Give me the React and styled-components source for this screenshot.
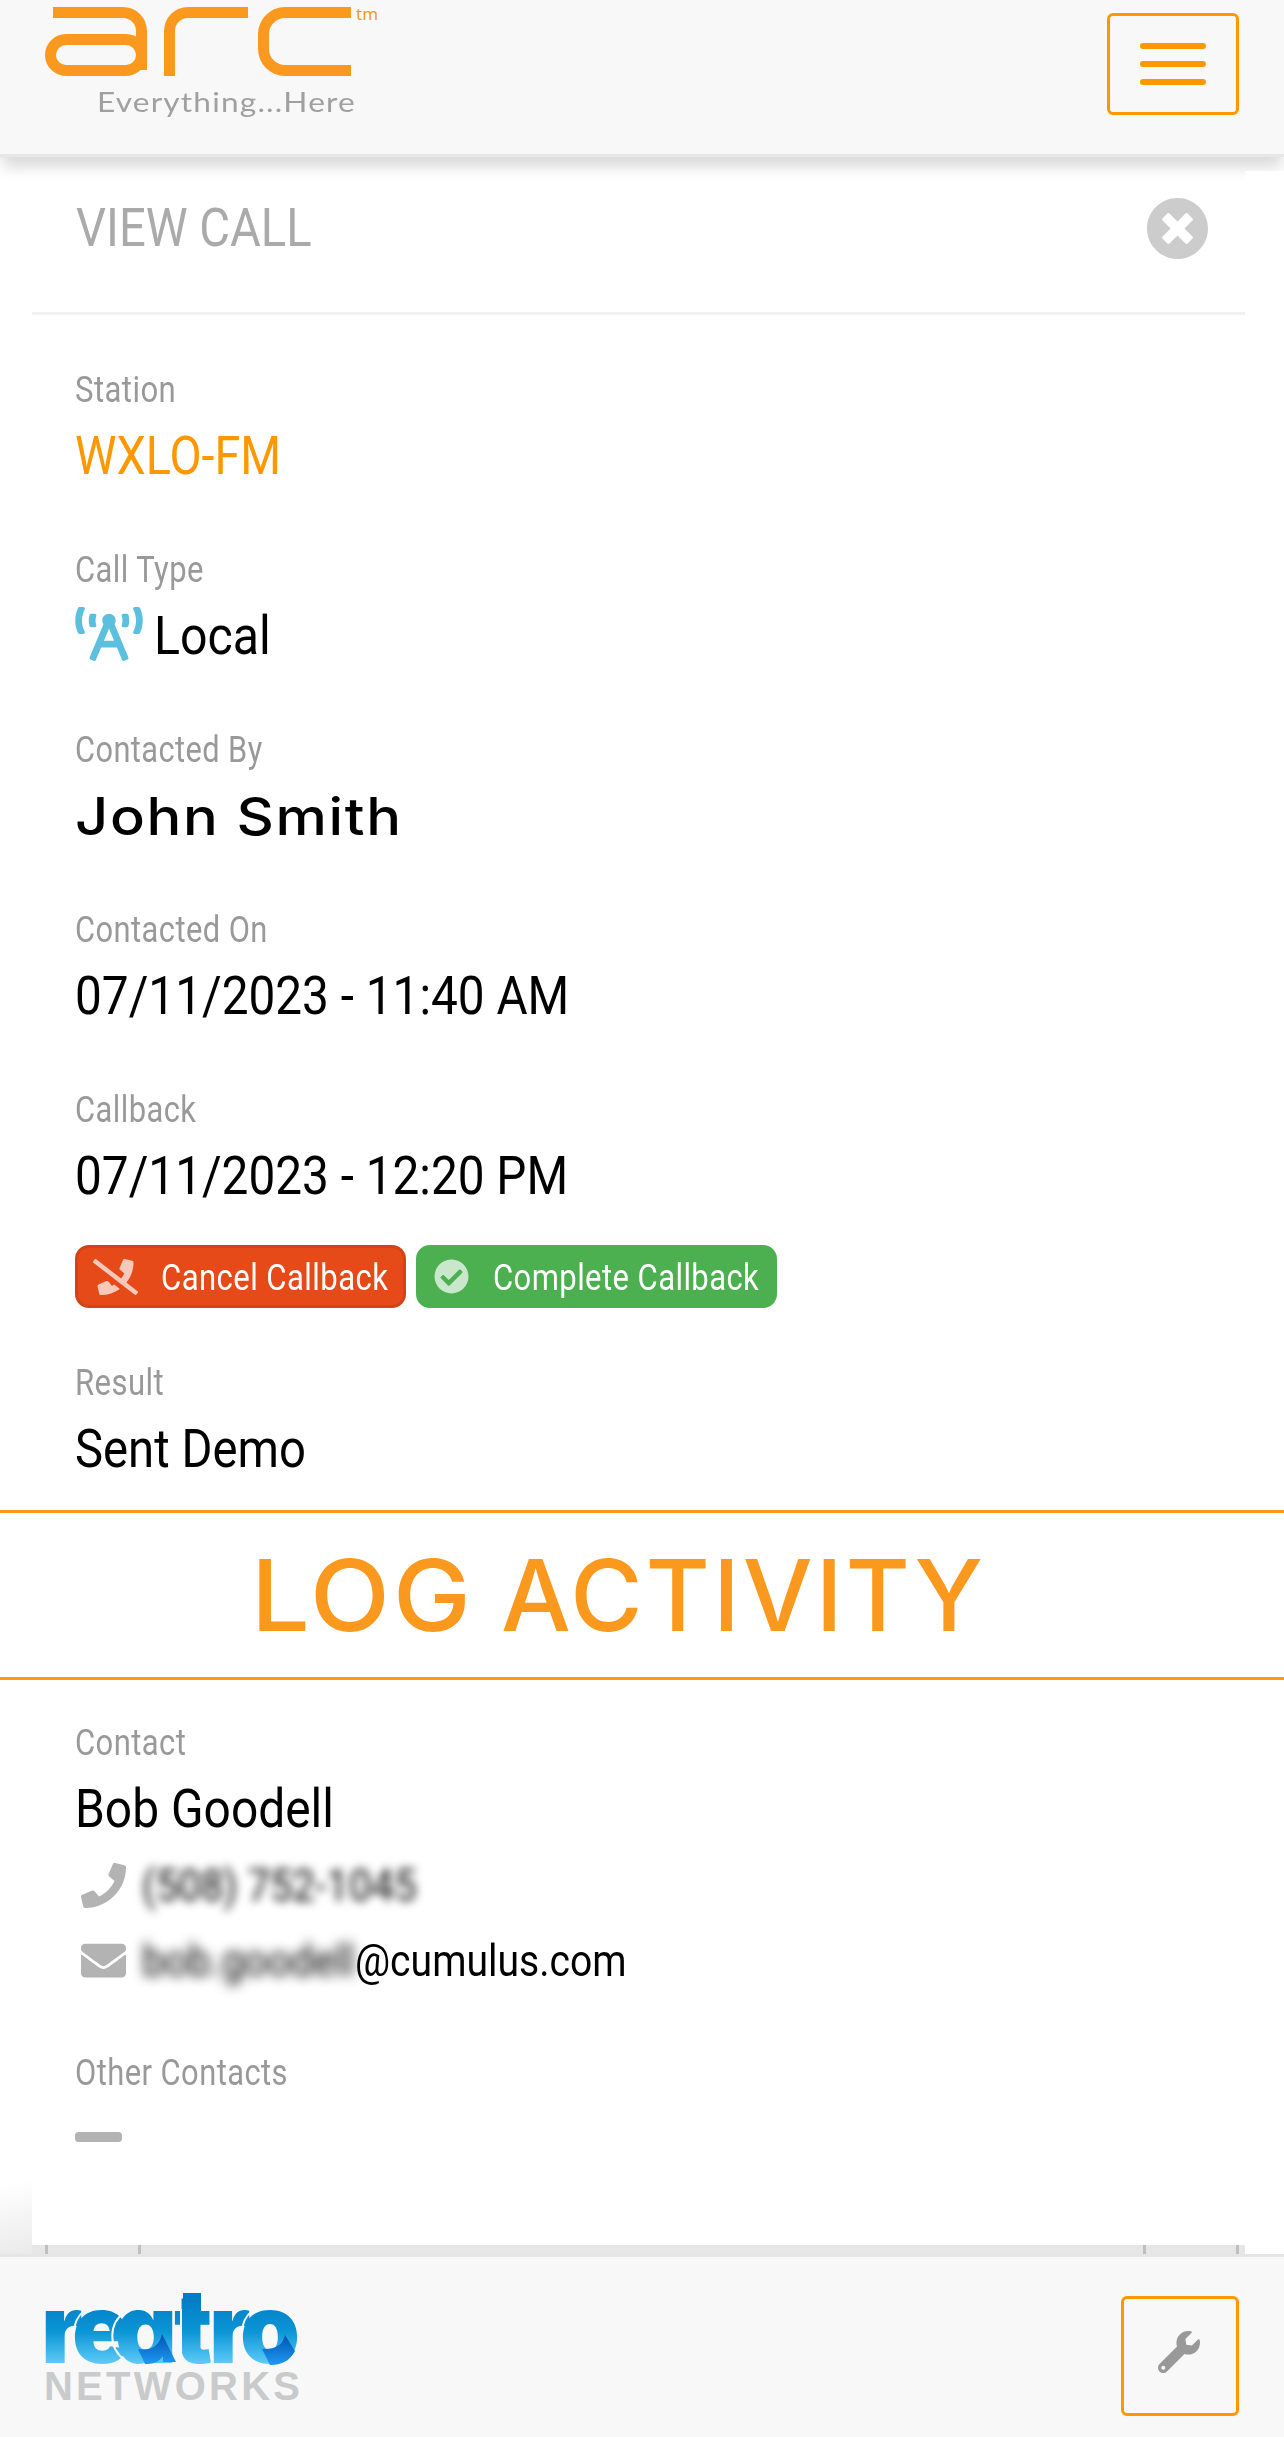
import React from 'react';
import styled, { createGlobalStyle } from 'styled-components';
import {
  FaBroadcastTower,
  FaCheckCircle,
  FaEnvelope,
  FaMinus,
  FaPhone,
  FaPhoneSlash,
  FaTimesCircle,
  FaWrench
} from 'react-icons/fa';

const GlobalStyle = createGlobalStyle`
  * { box-sizing: border-box; }

  body {
    margin: 0;
    background: #fff;
    font-family: Roboto, "Liberation Sans", sans-serif;
    color: #000;
  }

  svg { display: block; flex: none; }
`;

const Page = styled.div`
  width: 1284px;
  height: 2437px;
  display: flex;
  flex-direction: column;
  overflow: hidden;
`;

const TopBar = styled.header`
  position: relative;
  z-index: 1;
  flex: none;
  height: 157px;
  padding: 7px 45px 0;
  display: flex;
  justify-content: space-between;
  background: #f8f8f8;
  border-bottom: 3px solid #e7e7e7;
  box-shadow: 0 12px 14px -2px rgba(0, 0, 0, 0.15);
`;

const ArcMark = styled.div`
  display: flex;
  height: 69px;
`;

const LetterA = styled.div`
  width: 102px;
  height: 69px;
  display: grid;
  margin-right: 17px;

  &::before, &::after {
    content: "";
    grid-area: 1 / 1;
    border: 11px solid #fb991e;
  }

  &::before {
    margin-left: 8px;
    height: 52px;
    border-left: 0;
    border-bottom: 0;
    border-top-right-radius: 24px;
  }

  &::after {
    margin-top: 27px;
    border-radius: 22px;
  }
`;

const LetterR = styled.div`
  width: 84px;
  margin-right: 10px;
  border: 11px solid #fb991e;
  border-right: 0;
  border-bottom: 0;
  border-top-left-radius: 24px;
`;

const LetterC = styled.div`
  width: 93px;
  border: 11px solid #fb991e;
  border-right: 0;
  border-radius: 27px 0 0 27px;
`;

const Trademark = styled.span`
  margin: -3px 0 0 5px;
  font: 17px/20px "Noto Sans", sans-serif;
  color: #fb991e;
`;

const Tagline = styled.div`
  margin: 9px 0 0 52px;
  font: 27px/34px Lato, sans-serif;
  letter-spacing: 1px;
  color: #a0a0a0;
`;

const Toggle = styled.button`
  width: 132px;
  height: 102px;
  margin-top: 6px;
  padding: 0;
  display: flex;
  flex-direction: column;
  align-items: center;
  justify-content: center;
  gap: 12px;
  background: none;
  border: 3px solid #ff9800;
  border-radius: 6px;
`;

const ToggleBar = styled.span`
  width: 66px;
  height: 6px;
  border-radius: 3px;
  background: #ff9800;
`;

const PanelHead = styled.div`
  position: relative;
  z-index: 2;
  flex: none;
  height: 158px;
  margin: 0 39px 0 32px;
  padding: 38px 36px 0 44px;
  display: flex;
  justify-content: space-between;
  border-bottom: 3px solid #f1f1f1;
  font-size: 54px;
  line-height: 66px;
  color: #aaa;

  svg {
    margin-top: 2px;
    color: #ccc;
  }

  /* gutter beside the panel, over the header shadow */
  &::after {
    content: "";
    position: absolute;
    top: 14px;
    left: 100%;
    width: 39px;
    height: 144px;
    background: #fff;
  }
`;

const Section = styled.section`
  height: ${props => props.$height}px;
  flex: none;
  padding: ${props => props.$top}px 75px 0;
`;

const Field = styled.div`
  margin-bottom: ${props => props.$tight ? '6px' : '57px'};
`;

const Label = styled.div`
  font-size: 36px;
  line-height: 48px;
  letter-spacing: 0.5px;
  color: #999;
`;

const Value = styled.div`
  margin-top: 9px;
  display: flex;
  height: 66px;
  font-size: 54px;
  line-height: 66px;
  color: ${props => props.$accent ? '#ff9800' : '#000'};

  svg {
    width: 68px;
    margin: 4px 11px 0 0;
    color: #5bc0de;
  }
`;

const PersonValue = styled(Value)`
  font: 500 52px/68px Inter, sans-serif;
  letter-spacing: 1.5px;
`;

const Buttons = styled.div`
  display: flex;
  gap: 10px;
  margin: -21px 0 51px;
`;

const Button = styled.button`
  width: ${props => props.$danger ? 331 : 361}px;
  height: 63px;
  padding: 0 15px;
  display: flex;
  align-items: center;
  justify-content: space-between;
  font: 36px/54px Roboto, sans-serif;
  letter-spacing: 0.5px;
  text-align: left;
  color: #fff;
  background: ${props => props.$danger ? '#e64a19' : '#4caf50'};
  border: 3px solid ${props => props.$danger ? '#d24317' : '#4caf50'};
  border-radius: 14px;

  svg {
    width: ${props => props.$danger ? 45 : 35}px;
    opacity: 0.7;
  }

  > span { padding-top: 2px; }
`;

const LogStrip = styled.div`
  flex: none;
  height: 170px;
  padding-left: 251px;
  display: flex;
  gap: 27px;
  border: solid #fb991e;
  border-width: 3.5px 0;
  font: 500 99px/165px Inter, sans-serif;
  letter-spacing: 3px;
  color: #fb991e;
`;

const ContactRow = styled.div`
  display: flex;
  align-items: center;
  height: 75px;
  padding-left: 6px;
  font-size: 45px;
  line-height: 60px;

  svg {
    margin-right: 16px;
    color: #b3b3b3;
  }

  & + & { margin-bottom: 51px; }
`;

const Obscured = styled.span`
  display: flex;
  filter: blur(${props => props.$strong ? '6px' : '5px'});
  color: #000;
`;

const Empty = styled.div`
  margin-top: 13px;
  color: #b3b3b3;

  svg { width: 47px; }
`;

const Shade = styled.div`
  flex: none;
  width: 32px;
  height: 73px;
  margin: -64px 0 -9px;
  background: linear-gradient(170deg, #fff 5%, #eaeaea);
`;

const TableEdge = styled.div`
  flex: none;
  height: 9px;
  margin: 0 39px 0 32px;
  padding: 0 6px 0 13px;
  display: flex;
  justify-content: space-between;
  background: #e6e6e6;
`;

const Cell = styled.div`
  width: 96px;
  border: solid #bfbfbf;
  border-width: 0 3px;
`;

const BottomBar = styled.footer`
  flex: none;
  height: 183px;
  padding: 0 45px 0 36px;
  display: flex;
  justify-content: space-between;
  background: #f8f8f8;
  border-top: 3px solid #e5e5e5;
`;

const ToolButton = styled.button`
  width: 118px;
  height: 120px;
  margin-top: 39px;
  padding: 0 2px 8px 0;
  display: flex;
  align-items: center;
  justify-content: center;
  background: none;
  border: 3px solid #ff9800;
  border-radius: 6px;
  color: #999;
`;

const FitBox = styled.span`
  display: block;
  flex: none;
  width: ${props => props.$width}px;
  white-space: nowrap;
`;

const FitText = styled.span`
  display: inline-block;
  transform-origin: 0 50%;
`;

// Condenses a line of text to the given width
const Fit = ({ width, children }) => {
  const ref = React.useRef(null);
  const [scale, setScale] = React.useState(1);

  React.useLayoutEffect(() => {
    setScale(width / ref.current.offsetWidth);
  }, [width, children]);

  return (
    <FitBox $width={width}>
      <FitText ref={ref} style={{ transform: `scaleX(${scale})` }}>{children}</FitText>
    </FitBox>
  );
};

const Wordmark = styled.text`
  font: 900 96px Inter, sans-serif;
  font-feature-settings: "cv11";
`;

const ReatroLogo = () => (
  <svg width="270" height="156" viewBox="-8 0 270 156">
    <defs>
      <linearGradient id="blue" gradientUnits="userSpaceOnUse" x1="0" y1="43" x2="0" y2="107">
        <stop offset="0" stopColor="#007dc5" />
        <stop offset="0.5" stopColor="#0c96d6" />
        <stop offset="1" stopColor="#5fcbf8" />
      </linearGradient>
      <linearGradient id="fold" x1="0" y1="0" x2="0" y2="1">
        <stop offset="0" stopColor="#0052b4" />
        <stop offset="1" stopColor="#1e9af0" />
      </linearGradient>
    </defs>
    <rect x="139" y="36" width="18" height="24" fill="url(#blue)" />
    <Wordmark x="-3 28 71 130 165 196" y="106" fill="url(#blue)">reatro</Wordmark>
    <g fill="none" stroke="#f8f8f8" strokeWidth="2">
      <path d="M41 53a29 29 0 0 0 -11 24" />
      <path d="M81 55a29 29 0 0 0 0 48" />
      <path d="M137 52v56" />
      <path d="M209 53a29 29 0 0 0 -11 24" />
    </g>
    <path d="M94 92q20 3 24 -15l14 28h-13v-6q-6 9 -18 8z" fill="url(#fold)" />
    <path d="M218 92q20 1 23 -14l10 16q-7 14 -25 14z" fill="url(#fold)" />
    <text
      x="0"
      y="143"
      textLength="256"
      fontFamily="Liberation Sans, sans-serif"
      fontSize="40"
      fontWeight="700"
      fill="#c9cacc"
    >NETWORKS</text>
  </svg>
);

class App extends React.Component {

  render() {
    return (
      <Page>
        <GlobalStyle />

        <TopBar>
          <div>
            <ArcMark aria-label="arc">
              <LetterA />
              <LetterR />
              <LetterC />
              <Trademark>tm</Trademark>
            </ArcMark>
            <Tagline><Fit width={259}>Everything...Here</Fit></Tagline>
          </div>
          <Toggle aria-label="Menu">
            <ToggleBar />
            <ToggleBar />
            <ToggleBar />
          </Toggle>
        </TopBar>

        <PanelHead>
          <Fit width={236}>VIEW CALL</Fit>
          <FaTimesCircle size={63} />
        </PanelHead>

        <Section $top={51} $height={1195}>
          <Field>
            <Label><Fit width={101}>Station</Fit></Label>
            <Value $accent><Fit width={206}>WXLO-FM</Fit></Value>
          </Field>
          <Field>
            <Label><Fit width={129}>Call Type</Fit></Label>
            <Value>
              <FaBroadcastTower size={54} />
              <Fit width={117}>Local</Fit>
            </Value>
          </Field>
          <Field>
            <Label><Fit width={188}>Contacted By</Fit></Label>
            <PersonValue><Fit width={328}>John Smith</Fit></PersonValue>
          </Field>
          <Field>
            <Label><Fit width={193}>Contacted On</Fit></Label>
            <Value><Fit width={494}>07/11/2023 - 11:40 AM</Fit></Value>
          </Field>
          <Field>
            <Label><Fit width={121}>Callback</Fit></Label>
            <Value><Fit width={493}>07/11/2023 - 12:20 PM</Fit></Value>
          </Field>
          <Buttons>
            <Button $danger>
              <FaPhoneSlash size={36} />
              <Fit width={227}>Cancel Callback</Fit>
            </Button>
            <Button>
              <FaCheckCircle size={35} />
              <Fit width={266}>Complete Callback</Fit>
            </Button>
          </Buttons>
          <Field>
            <Label><Fit width={89}>Result</Fit></Label>
            <Value><Fit width={231}>Sent Demo</Fit></Value>
          </Field>
        </Section>

        <LogStrip>
          <Fit width={223}>LOG</Fit>
          <Fit width={485}>ACTIVITY</Fit>
        </LogStrip>

        <Section $top={39} $height={565}>
          <Field $tight>
            <Label><Fit width={111}>Contact</Fit></Label>
            <Value><Fit width={259}>Bob Goodell</Fit></Value>
          </Field>
          <ContactRow>
            <FaPhone size={45} />
            <Obscured><Fit width={275}>(508) 752-1045</Fit></Obscured>
          </ContactRow>
          <ContactRow>
            <FaEnvelope size={45} />
            <Obscured $strong><Fit width={213}>bob.goodell</Fit></Obscured>
            <Fit width={272}>@cumulus.com</Fit>
          </ContactRow>
          <Label><Fit width={213}>Other Contacts</Fit></Label>
          <Empty><FaMinus size={54} /></Empty>
        </Section>

        <Shade />
        <TableEdge>
          <Cell />
          <Cell />
        </TableEdge>

        <BottomBar>
          <ReatroLogo />
          <ToolButton aria-label="Tools"><FaWrench size={42} /></ToolButton>
        </BottomBar>
      </Page>
    );
  }

}

export default App;
